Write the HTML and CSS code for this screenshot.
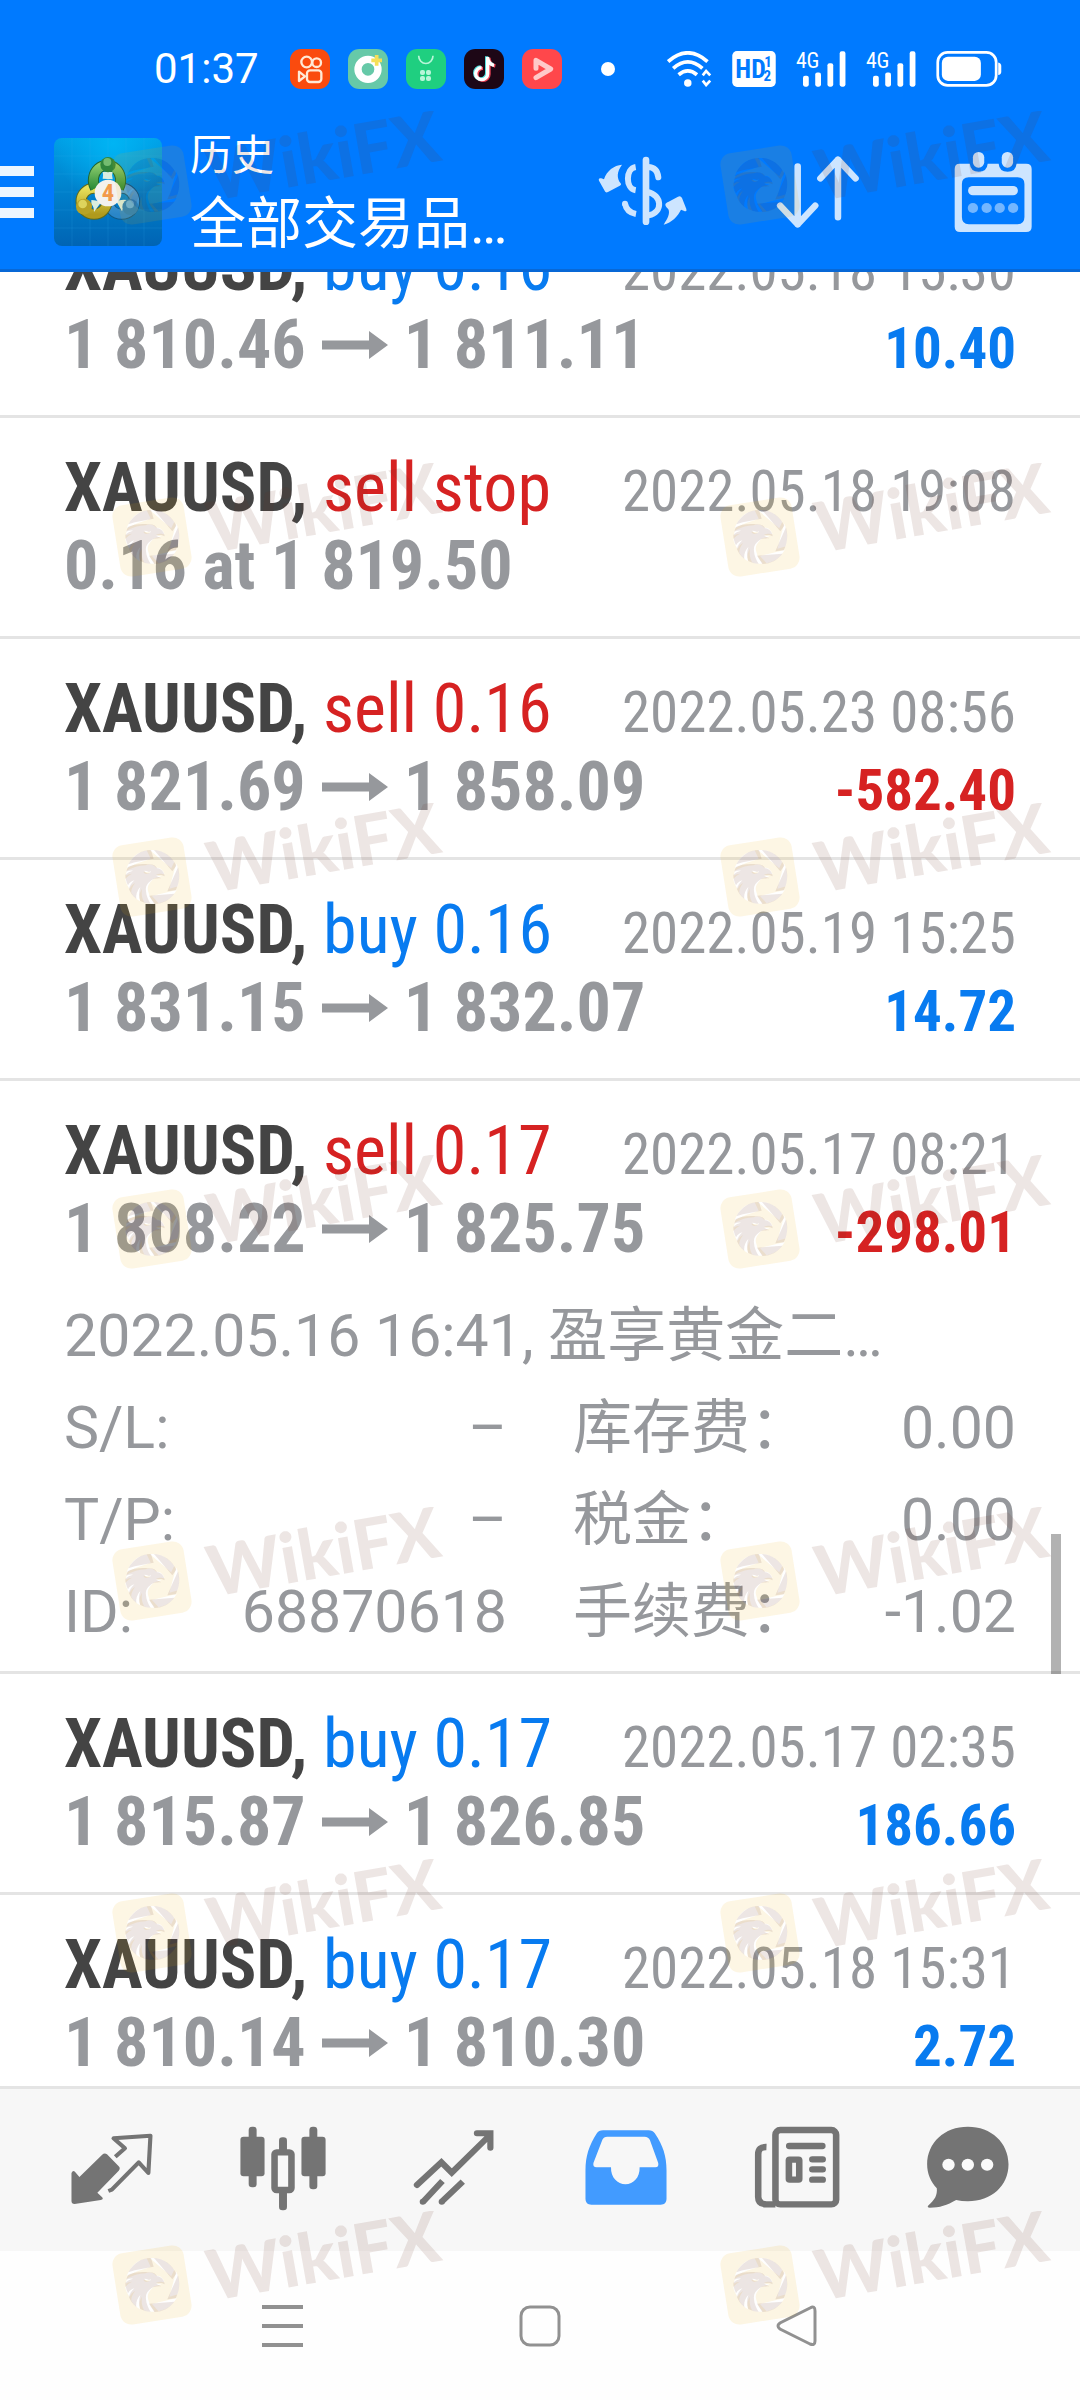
FILE: index.html
```html
<!DOCTYPE html>
<html lang="zh-CN">
<head>
    <meta charset="UTF-8">
    <meta name="viewport" content="width=device-width, initial-scale=1.0">
    <title>历史</title>
    <link rel="stylesheet" href="styles.css">
</head>
<body>
    <svg class="defs" aria-hidden="true">
        <symbol id="arrow" viewBox="0 0 66 28">
            <path d="M0 9.500h47V0l19 14-19 14v-9.500H0z" fill="currentColor"/>
        </symbol>
        <symbol id="signal" viewBox="0 0 146 106">
            <text x="-1" y="50" class="signal-text">4G</text>
            <g fill="#fff">
                <rect x="20" y="73" width="17" height="32" rx="6"/>
                <rect x="56" y="63" width="17" height="42" rx="6"/>
                <rect x="92" y="36" width="17" height="69" rx="6"/>
                <rect x="128" y="1" width="17" height="104" rx="6"/>
            </g>
        </symbol>
        <symbol id="mark" viewBox="0 0 340 130">
            <mask id="hole">
                <rect width="120" height="130" fill="#fff"/>
                <use href="#eagle" fill="#000"/>
            </mask>
            <rect x="11" y="38" width="72" height="72" rx="11" transform="rotate(-9 47 74)" fill="rgba(237,173,10,.11)" mask="url(#hole)"/>
            <use href="#eagle" fill="rgba(105,47,30,.12)"/>
            <text x="107" y="90" transform="rotate(-10 107 90)" class="mark-text">WikiFX</text>
        </symbol>
        <g id="eagle" transform="scale(.3333)">
            <path d="M70 184C86 155 112 140 138 141l8 26C122 172 96 174 70 184zM147 141c32 2 54 20 67 47l-12 17zM219 193c7 24 4 48-7 69l-25 3zM208 272c-15 19-34 30-60 31l-16-25z"/>
            <path d="M64 194C84 184 108 182 128 184c14-2 24 3 29 12 13 2 21 12 22 24-8-5-18-5-26-2l16 8c-12 1-22-1-30 6-12 9-18 18-16 32 1 14 6 26 14 38-12 0-22-3-31-8-5-14-5-28 0-42-10 11-14 24-12 36-10-8-18-18-22-30 2-10 8-18 16-26-9 3-15 8-19 15-5-11-8-21-8-31 6-7 14-11 23-13-8-1-14 0-20 3 1-5 3-9 5-13zM118 203c8-1 12 6 20 2-2 8-16 8-20-2z" fill-rule="evenodd"/>
        </g>
    </svg>

    <header>
        <div class="status">
            <span class="time">01:37</span>
            <div class="apps">
                <svg viewBox="0 0 120 120"><rect width="120" height="120" rx="34" fill="#fa4b0e"/><g fill="none" stroke="#ffe9d6" stroke-width="7"><circle cx="50" cy="39" r="16"/><circle cx="80" cy="41" r="13"/><rect x="51" y="64" width="43" height="35" rx="9"/><path d="M27 68v28l18-14z" stroke-linejoin="round"/></g></svg>
                <svg viewBox="0 0 120 120"><rect width="120" height="120" rx="34" fill="#66c9a8"/><circle cx="60" cy="61" r="30" fill="none" stroke="#fff" stroke-width="22"/><path d="M86 18v32M70 34h32" stroke="#f5df58" stroke-width="11"/></svg>
                <svg viewBox="0 0 120 120"><rect width="120" height="120" rx="34" fill="#1fcf80"/><path d="M38 20a21 23 0 0 0 43 0" fill="none" stroke="#b8f5d8" stroke-width="5"/><g fill="#b8f5d8"><rect x="42" y="63" width="15" height="15" rx="6"/><rect x="60" y="63" width="15" height="15" rx="6"/><rect x="42" y="81" width="15" height="15" rx="6"/><rect x="60" y="81" width="15" height="15" rx="6"/></g></svg>
                <svg viewBox="0 0 120 120"><rect width="120" height="120" rx="34" fill="#1d0716"/><g fill="none" stroke-width="10"><path d="M75 26v50a18 18 0 1 1-18-18M75 30q4 18 19 21" stroke="#f04458"/><path d="M68 22v50a18 18 0 1 1-18-18M68 26q4 18 19 21" stroke="#55e0e0"/><path d="M71 24v50a18 18 0 1 1-18-18M71 28q4 18 19 21" stroke="#fff"/></g></svg>
                <svg viewBox="0 0 120 120"><rect width="120" height="120" rx="34" fill="#ff474b"/><path d="M42 58V34l44 26-44 26" fill="none" stroke="#ffc9c9" stroke-width="15" stroke-linecap="round" stroke-linejoin="round"/></svg>
            </div>
            <span class="dot"></span>
            <div class="signals">
                <svg class="wifi" viewBox="0 0 132 106"><g fill="none" stroke="#fff" stroke-width="11"><path d="M3 31Q61-20 119 31M18 51q43-38 86 0M34 70q27-23 54 0"/></g><circle cx="61" cy="94" r="11" fill="#fff"/><path d="M105 72l10-13 12 13M105 87l10 13 12-13" fill="none" stroke="#fff" stroke-width="8"/></svg>
                <svg class="hd" viewBox="0 0 128 106"><rect width="128" height="106" rx="14" fill="#fff"/><text x="9" y="79" class="hd-text">HD</text><text x="94" y="46" class="hd-num">1</text><text x="92" y="87" class="hd-num">2</text></svg>
                <svg class="bars"><use href="#signal"/></svg>
                <svg class="bars"><use href="#signal"/></svg>
                <svg class="battery" viewBox="0 0 192 106"><rect x="4" y="4" width="172" height="97" rx="29" fill="none" stroke="#fff" stroke-width="8"/><rect x="16" y="17" width="115" height="71" rx="18" fill="#fff"/><path d="M182 34q9 2 9 10v17q0 8-9 10z" fill="#fff"/></svg>
            </div>
        </div>

        <div class="appbar">
            <button class="menu" aria-label="菜单"><span></span><span></span><span></span></button>
            <svg class="logo" viewBox="0 0 324 324">
                <defs>
                    <linearGradient id="sky" x1="0" y1="0" x2="0" y2="1"><stop offset="0" stop-color="#009fe6"/><stop offset=".5" stop-color="#0080cb"/><stop offset="1" stop-color="#0064b4"/></linearGradient>
                    <radialGradient id="glow" cx=".55" cy=".05" r=".55"><stop offset="0" stop-color="#00b4f4"/><stop offset="1" stop-color="#00b4f4" stop-opacity="0"/></radialGradient>
                    <linearGradient id="green" x1="0" y1="0" x2="0" y2="1"><stop offset="0" stop-color="#8acb6c"/><stop offset="1" stop-color="#2f8d38"/></linearGradient>
                    <linearGradient id="gold" x1="0" y1="0" x2="0" y2="1"><stop offset="0" stop-color="#e8e05a"/><stop offset="1" stop-color="#b09a1c"/></linearGradient>
                    <linearGradient id="blue" x1="0" y1="0" x2="0" y2="1"><stop offset="0" stop-color="#5aa6d6"/><stop offset="1" stop-color="#2a86c8"/></linearGradient>
                </defs>
                <rect width="324" height="324" rx="24" fill="url(#sky)"/>
                <rect width="324" height="324" rx="24" fill="url(#glow)"/>
                <path d="M54 0v324M108 0v324M162 0v324M216 0v324M270 0v324M0 54h324M0 108h324M0 162h324M0 216h324M0 270h324" stroke="#3bb4ee" stroke-opacity=".16" stroke-width="3"/>
                <g fill="none" stroke-width="27">
                    <circle cx="203" cy="190" r="39" stroke="#115a86" stroke-width="33"/>
                    <circle cx="203" cy="190" r="39" stroke="url(#blue)"/>
                    <circle cx="120" cy="190" r="39" stroke="#5e6a1c" stroke-width="33"/>
                    <circle cx="120" cy="190" r="39" stroke="url(#gold)"/>
                    <path d="M124 150a41 45 0 1 1 70 0" stroke="#1f6532" stroke-width="33"/>
                    <path d="M124 150a41 45 0 1 1 70 0" stroke="url(#green)"/>
                </g>
                <path d="M146 122q3-10 0-20h30q-4 10 0 22zM112 186q18 0 28 8l-20 28q0-16-8-24zM218 186q-22-2-30 6l16 28q4-16 18-20z" fill="#d9eee0"/>
                <circle cx="162" cy="80" r="23" fill="#31853c"/><circle cx="160" cy="72" r="12" fill="#74bb70"/>
                <circle cx="90" cy="206" r="24" fill="#b8a326"/><circle cx="86" cy="198" r="13" fill="#ded45c"/>
                <circle cx="229" cy="207" r="24" fill="#2a7fb8"/><circle cx="228" cy="199" r="12" fill="#64aeda"/>
                <circle cx="162" cy="165" r="40" fill="#f3f2ee"/>
                <text x="143" y="190" class="logo-num">4</text>
            </svg>
            <div class="title">
                <h1>历史</h1>
                <p>全部交易品…</p>
            </div>
            <div class="actions">
                <button aria-label="货币">
                    <svg width="90" height="72" viewBox="22 42 270 216"><g fill="none" stroke="#cde5ff" stroke-width="18"><path d="M166 54V239" stroke-width="20" stroke-linecap="round"/><path d="M135 75C104 80 104 140 135 145M103 185q5 26 33 31"/><path d="M103 185h0M203 106Q200 76 172 75M170 150C215 158 218 212 174 220" stroke-linecap="round"/></g><path d="M94 68C78 90 78 108 90 124c3 4 0 6-4 8L52 150q-8 4-11-5L25 116q-3-9 7-7l8 3C48 86 70 70 94 68zM219 248c12-18 20-34 14-46-3-5-9-8-9-14 0-5 5-7 10-9l28-15q8-4 12 4l13 33q3 10-8 5l-8-3c-9 18-28 40-52 45z" fill="#cde5ff"/></svg>
                </button>
                <button aria-label="排序">
                    <svg width="84" height="74" viewBox="683 460 244 222" preserveAspectRatio="none"><path d="M746 494V668M695 612l51 56 51-56M863 647V474M812 530l51-56 51 56" fill="none" stroke="#cde5ff" stroke-width="19" stroke-linecap="round" stroke-linejoin="round"/></svg>
                </button>
                <button aria-label="日期">
                    <svg width="78" height="82" viewBox="1199 447 227 246" preserveAspectRatio="none"><path fill-rule="evenodd" fill="#cde5ff" d="M1215 485h30q2 24 26 24t26-24h32q2 24 26 24t26-24h28q16 0 16 16v173q0 16-16 16H1217q-16 0-16-16V501q0-16 14-16zM1242 526q-20 0-20 20v99q0 22 20 22h142q20 0 20-22v-99q0-20-20-20z"/><g fill="#cde5ff"><rect x="1254" y="450" width="33" height="47" rx="16"/><rect x="1338" y="450" width="33" height="47" rx="16"/><rect x="1240" y="552" width="145" height="28" rx="14"/></g><g fill="#73b6ff"><circle cx="1254" cy="618" r="15"/><circle cx="1294" cy="618" r="15"/><circle cx="1332" cy="618" r="15"/><circle cx="1371" cy="618" r="15"/></g></svg>
                </button>
            </div>
        </div>
    </header>

    <main>
        <ul class="deals">
            <li>
                <div class="line"><h2>XAUUSD, <span class="buy">buy 0.16</span></h2><time>2022.05.18 15:30</time></div>
                <div class="line"><p class="price">1 810.46<svg><use href="#arrow"/></svg>1 811.11</p><b class="profit buy">10.40</b></div>
            </li>
            <li>
                <div class="line"><h2>XAUUSD, <span class="sell">sell stop</span></h2><time>2022.05.18 19:08</time></div>
                <div class="line"><p class="price">0.16 at 1 819.50</p></div>
            </li>
            <li>
                <div class="line"><h2>XAUUSD, <span class="sell">sell 0.16</span></h2><time>2022.05.23 08:56</time></div>
                <div class="line"><p class="price">1 821.69<svg><use href="#arrow"/></svg>1 858.09</p><b class="profit sell">-582.40</b></div>
            </li>
            <li>
                <div class="line"><h2>XAUUSD, <span class="buy">buy 0.16</span></h2><time>2022.05.19 15:25</time></div>
                <div class="line"><p class="price">1 831.15<svg><use href="#arrow"/></svg>1 832.07</p><b class="profit buy">14.72</b></div>
            </li>
            <li>
                <div class="line"><h2>XAUUSD, <span class="sell">sell 0.17</span></h2><time>2022.05.17 08:21</time></div>
                <div class="line"><p class="price">1 808.22<svg><use href="#arrow"/></svg>1 825.75</p><b class="profit sell">-298.01</b></div>
                <div class="details">
                    <p class="comment">2022.05.16 16:41, 盈享黄金二…</p>
                    <dl>
                        <div><dt>S/L:</dt><dd>–</dd></div>
                        <div><dt>库存费：</dt><dd>0.00</dd></div>
                        <div><dt>T/P:</dt><dd>–</dd></div>
                        <div><dt>税金：</dt><dd>0.00</dd></div>
                        <div><dt>ID:</dt><dd>68870618</dd></div>
                        <div><dt>手续费：</dt><dd>-1.02</dd></div>
                    </dl>
                </div>
            </li>
            <li>
                <div class="line"><h2>XAUUSD, <span class="buy">buy 0.17</span></h2><time>2022.05.17 02:35</time></div>
                <div class="line"><p class="price">1 815.87<svg><use href="#arrow"/></svg>1 826.85</p><b class="profit buy">186.66</b></div>
            </li>
            <li>
                <div class="line"><h2>XAUUSD, <span class="buy">buy 0.17</span></h2><time>2022.05.18 15:31</time></div>
                <div class="line"><p class="price">1 810.14<svg><use href="#arrow"/></svg>1 810.30</p><b class="profit buy">2.72</b></div>
            </li>
        </ul>
        <span class="scroll-thumb"></span>
    </main>

    <nav class="tabs">
        <a href="#" aria-label="行情"><svg viewBox="196 155 261 270" preserveAspectRatio="none"><path d="M209 308q4-10 10-4l13 16 66-67q7-7 14-1l34 36q6 6 0 13l-62 66 14 14q5 6-4 8l-76 12q-9 0-9-9z" fill="#747474"/><path d="M336 259l28-25-33-30 107-8-6 112-28-32-78 82-10 4" fill="none" stroke="#747474" stroke-width="12" stroke-linejoin="round"/></svg></a>
        <a href="#" aria-label="图表"><svg viewBox="691 155 261 270" preserveAspectRatio="none"><g fill="#747474"><rect x="722" y="169" width="23" height="182" rx="10"/><rect x="698" y="199" width="70" height="119" rx="9"/><rect x="898" y="169" width="23" height="188" rx="10"/><rect x="875" y="199" width="70" height="119" rx="9"/><rect x="810" y="201" width="23" height="50" rx="10"/><rect x="810" y="355" width="23" height="65" rx="10"/></g><rect x="797" y="246" width="49" height="113" rx="6" fill="none" stroke="#747474" stroke-width="19"/></svg></a>
        <a href="#" aria-label="交易"><svg viewBox="1188 155 261 270" preserveAspectRatio="none"><g fill="none" stroke="#747474" stroke-width="18"><path d="M1211 344l71-68 30 31 111-113M1385 189h39v43" stroke-linecap="round"/><path d="M1285 332l-56 62M1344 334l-61 60"/></g><circle cx="1228" cy="394" r="9" fill="#747474"/><circle cx="1283" cy="394" r="9" fill="#747474"/></svg></a>
        <a href="#" aria-label="历史"><svg viewBox="120 155 261 270" preserveAspectRatio="none"><path fill="#429bff" fill-rule="evenodd" d="M184 180H316q12 0 18 9C358 226 368 258 368 300v86q0 17-17 17H150q-17 0-17-17V300C133 258 143 226 166 189q5-9 18-9zM196 199q-10 0-14 9l-26 70q-2 13 9 13h42C206 322 226 342 249 342s42-20 41-51h46q10 0 8-13l-24-68q-4-11-16-11z"/></svg></a>
        <a href="#" aria-label="新闻"><svg viewBox="620 155 261 270" preserveAspectRatio="none"><g fill="none" stroke="#747474" stroke-width="19"><rect x="688" y="179" width="176" height="223" rx="14"/><path d="M662 230q-24-1-24 22v128q0 22 24 22h26"/><path d="M728 227h96M795 267h30M795 297h30M795 328h30" stroke-linecap="round"/><rect x="727" y="268" width="30" height="60" rx="2"/></g></svg></a>
        <a href="#" aria-label="信息"><svg viewBox="1104 155 261 270" preserveAspectRatio="none"><path fill="#747474" d="M1234 169c68 0 118 48 118 113s-50 111-118 111q-18 0-34-4c-26 16-48 23-76 23q-10 0-4-7c18-16 26-30 24-51C1126 334 1116 310 1116 282c0-65 50-113 118-113z"/><g fill="#fafafa"><circle cx="1178" cy="283" r="18"/><circle cx="1234" cy="283" r="18"/><circle cx="1290" cy="283" r="18"/></g></svg></a>
    </nav>

    <footer>
        <button aria-label="最近"><svg viewBox="0 0 42 42"><path d="M0 2h41M0 21h41M0 40h41" stroke="#919191" stroke-width="4"/></svg></button>
        <button aria-label="主页"><svg viewBox="0 0 42 42"><rect x="2" y="2" width="38" height="38" rx="9" fill="none" stroke="#919191" stroke-width="3"/></svg></button>
        <button aria-label="返回"><svg viewBox="0 0 42 42"><path d="M34 3Q39 0 39 6V36q0 5-5 3L4 24q-4-3 0-6z" fill="none" stroke="#919191" stroke-width="3"/></svg></button>
    </footer>

    <div class="watermarks" aria-hidden="true">
        <svg><use href="#mark"/></svg><svg><use href="#mark"/></svg>
        <svg><use href="#mark"/></svg><svg><use href="#mark"/></svg>
        <svg><use href="#mark"/></svg><svg><use href="#mark"/></svg>
        <svg><use href="#mark"/></svg><svg><use href="#mark"/></svg>
        <svg><use href="#mark"/></svg><svg><use href="#mark"/></svg>
        <svg><use href="#mark"/></svg><svg><use href="#mark"/></svg>
        <svg><use href="#mark"/></svg><svg><use href="#mark"/></svg>
    </div>
</body>
</html>
```
FILE: styles.css
```css
* {
    box-sizing: border-box;
    margin: 0;
    padding: 0;
}

body {
    position: relative;
    display: flex;
    flex-direction: column;
    height: 100vh;
    overflow: hidden;
    background-color: #fff;
    color: #96989c;
    font-family: Roboto, "Noto Sans CJK SC", sans-serif;
}

button {
    border: none;
    background: none;
}

svg {
    display: block;
    flex-shrink: 0;
}

.defs {
    position: absolute;
    width: 0;
    height: 0;
}

/* Header */
header {
    background-color: #007aff;
    border-bottom: 3px solid #0868d6;
    color: #fff;
}

.status {
    display: flex;
    align-items: center;
    padding: 49px 78px 0 154px;
}

.time {
    font-size: 42px;
    line-height: 40px;
    margin-right: 31px;
}

.apps {
    display: flex;
    gap: 18px;
}

.apps svg {
    width: 40px;
    height: 40px;
}

.dot {
    width: 14px;
    height: 14px;
    margin-left: 39px;
    border-radius: 50%;
    background-color: #fff;
}

.signals {
    display: flex;
    gap: 20px;
    margin-left: auto;
}

.signals svg {
    height: 36px;
}

.wifi {
    width: 45px;
}

.hd {
    width: 44px;
}

.bars {
    width: 50px;
}

.battery {
    width: 66px;
}

.signal-text {
    font: 64px "Roboto Condensed", sans-serif;
    fill: #fff;
}

.hd-text {
    font: bold 76px "Roboto Condensed", sans-serif;
    fill: #007aff;
}

.hd-num {
    font: bold 44px "Roboto Condensed", sans-serif;
    fill: #007aff;
}

.appbar {
    display: flex;
    align-items: center;
    padding: 35px 0 9px;
}

.menu {
    display: flex;
    flex-direction: column;
    gap: 11px;
    margin-right: 20px;
}

.menu span {
    width: 34px;
    height: 10px;
    background-color: #edf6ff;
}

.logo {
    width: 108px;
    height: 108px;
}

.logo-num {
    font: bold 74px "Roboto Condensed", sans-serif;
    fill: #f29a4a;
}

.title {
    margin-left: 28px;
}

.title h1 {
    font-size: 42px;
    font-weight: normal;
    line-height: 64px;
}

.title p {
    font-size: 56px;
    line-height: 72px;
}

.actions {
    display: flex;
    margin-left: auto;
}

.actions button {
    display: flex;
    justify-content: center;
    align-items: center;
    width: 175px;
}

/* History list, scrolled part of the way down */
main {
    position: relative;
    flex: 1;
    min-height: 0;
    overflow: hidden;
}

.deals {
    list-style: none;
    margin-top: -75px;
}

.deals li {
    padding: 31px 64px;
    border-bottom: 3px solid #e4e4e4;
}

.line {
    display: flex;
    justify-content: space-between;
    align-items: baseline;
    height: 78px;
    font-family: "Roboto Condensed", Roboto, sans-serif;
    line-height: 78px;
    white-space: nowrap;
}

.line h2 {
    color: #444;
    font-size: 68px;
}

.line h2 span {
    font-weight: normal;
}

.line time,
.profit {
    font-size: 57px;
}

.price {
    display: flex;
    align-items: center;
    gap: 16px;
    font-size: 68px;
    font-weight: bold;
}

.price svg {
    width: 66px;
    height: 28px;
}

.line .buy {
    color: #087bf0;
}

.line .sell {
    color: #d62222;
}

.details {
    margin: 22px 0 -18px;
    font-size: 59px;
    line-height: 92px;
}

.details dl {
    display: grid;
    grid-template-columns: 1fr 1fr;
    column-gap: 66px;
}

.details dl div {
    display: flex;
    justify-content: space-between;
}

.scroll-thumb {
    position: absolute;
    top: 1262px;
    right: 19px;
    width: 10px;
    height: 140px;
    background-color: rgba(0, 0, 0, 0.3);
}

/* Bottom bars */
.tabs {
    display: flex;
    padding: 33px 26px 39px;
    border-top: 3px solid #e4e4e4;
    background-color: #f7f7f7;
}

.tabs a {
    flex: 1;
    display: flex;
    justify-content: center;
}

.tabs svg {
    width: 90px;
    height: 90px;
}

footer {
    display: flex;
    padding: 54px 154px 53px;
    background-color: #fefefe;
}

footer button {
    flex: 1;
    display: flex;
    justify-content: center;
}

footer svg {
    width: 42px;
    height: 42px;
}

/* Watermarks */
.watermarks {
    position: absolute;
    top: 111px;
    left: 105px;
    display: grid;
    grid-template-columns: 608px 340px;
    grid-template-rows: 352px 340px repeat(4, 352px) 130px;
    pointer-events: none;
}

.watermarks svg {
    width: 340px;
    height: 130px;
}

.mark-text {
    font: 900 70px Lato, sans-serif;
    fill: rgba(105, 47, 30, 0.12);
}
```
